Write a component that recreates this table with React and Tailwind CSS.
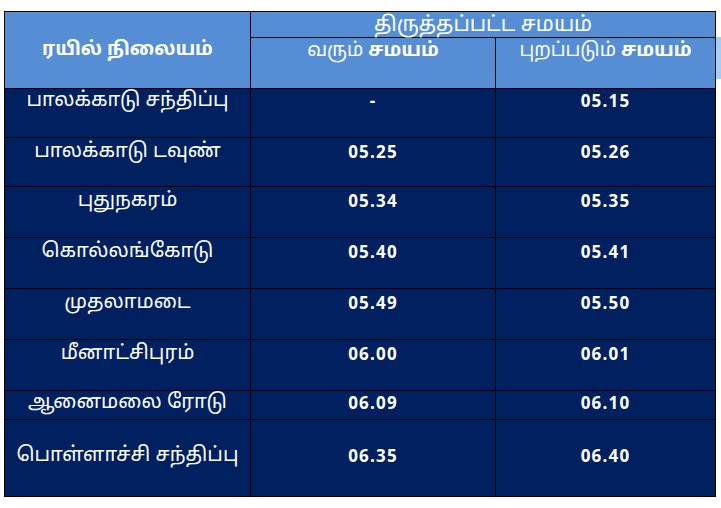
import React from "react";

const tamil = { fontFamily: '"Noto Sans Tamil", "Latha", "Noto Sans", "Liberation Sans", sans-serif' };
const num = { fontFamily: '"Open Sans", "Liberation Sans", sans-serif' };

const rows = [
  { name: "பாலக்காடு சந்திப்பு", arr: "-", dep: "05.15", h: "h-[49px]", pt: "pt-0" },
  { name: "பாலக்காடு டவுண்", arr: "05.25", dep: "05.26", h: "h-[49px]", pt: "pt-[2px]" },
  { name: "புதுநகரம்", arr: "05.34", dep: "05.35", h: "h-[51px]", pt: "pt-[2px]" },
  { name: "கொல்லங்கோடு", arr: "05.40", dep: "05.41", h: "h-[51px]", pt: "pt-[2px]" },
  { name: "முதலாமடை", arr: "05.49", dep: "05.50", h: "h-[51px]", pt: "pt-[2px]" },
  { name: "மீனாட்சிபுரம்", arr: "06.00", dep: "06.01", h: "h-[51px]", pt: "pt-[2px]" },
  { name: "ஆனைமலை ரோடு", arr: "06.09", dep: "06.10", h: "h-[29px]", pt: "pt-0" },
  { name: "பொள்ளாச்சி சந்திப்பு", arr: "06.35", dep: "06.40", h: "h-[77px]", pt: "pt-[24px]" },
];

export default function App() {
  return (
    <div className="w-[721px] h-[508px] bg-white overflow-hidden">
      <div className="flex items-start pt-[11px] pl-[4px]">
        <table className="border-collapse table-fixed text-white w-[711px]">
          <colgroup>
            <col className="w-[246px]" />
            <col className="w-[245px]" />
            <col className="w-[220px]" />
          </colgroup>
          <thead>
            <tr className="h-[26px] bg-[#558ed5]">
              <th
                rowSpan={2}
                className="border border-black align-middle text-[19px] font-bold leading-6"
                style={tamil}
              >
                ரயில் நிலையம்
              </th>
              <th
                colSpan={2}
                className="border border-black align-top text-center text-[21px] font-normal leading-[20px] pt-[4px] pb-0 px-0"
                style={tamil}
              >
                திருத்தப்பட்ட சமயம்
              </th>
            </tr>
            <tr className="h-[51px] bg-[#558ed5]">
              <th className="border border-black align-top text-[19px] font-normal leading-6 pt-[1px]" style={tamil}>
                வரும் <span className="font-bold">சமயம்</span>
              </th>
              <th className="border border-black align-top text-[19px] font-normal leading-6 pt-[1px]" style={tamil}>
                புறப்படும் <span className="font-bold">சமயம்</span>
              </th>
            </tr>
          </thead>
          <tbody>
            {rows.map((r) => (
              <tr key={r.name} className={`${r.h} bg-[#002060]`}>
                <td className={`border border-black align-top text-center text-[20px] leading-6 ${r.pt}`} style={tamil}>
                  {r.name}
                </td>
                <td className={`border border-black align-top text-center text-[17px] font-bold leading-6 tracking-[1.2px] ${r.pt}`} style={num}>
                  {r.arr}
                </td>
                <td className={`border border-black align-top text-center text-[17px] font-bold leading-6 tracking-[1.2px] ${r.pt}`} style={num}>
                  {r.dep}
                </td>
              </tr>
            ))}
          </tbody>
        </table>
        <div className="mt-[26px] h-[42px] w-[7px] bg-[#a6cdf2]" />
      </div>
    </div>
  );
}
